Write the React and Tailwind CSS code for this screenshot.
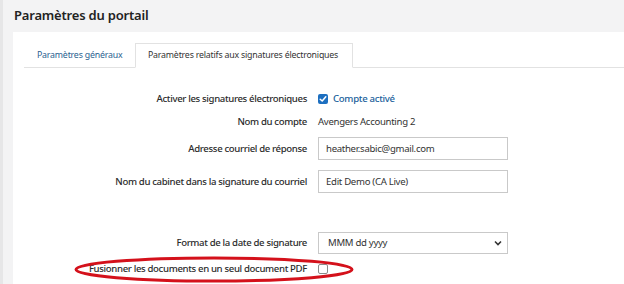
import React from "react";

function Check({ checked }) {
  if (checked) {
    return (
      <span className="w-[10px] h-[10px] rounded-[2px] bg-[#1d6fc0] flex items-center justify-center">
        <svg width="8" height="8" viewBox="0 0 8 8">
          <path d="M1.2 4.2 L3.2 6 L6.8 1.8" stroke="white" strokeWidth="1.5" fill="none" strokeLinecap="round" strokeLinejoin="round" />
        </svg>
      </span>
    );
  }
  return <span className="w-[10px] h-[10px] rounded-[2px] border border-[#8a8a8a] bg-white" />;
}

export default function App() {
  const label = "w-[294px] shrink-0 text-right mr-[11px] font-medium text-[#2b2b2b] tracking-[-0.35px]";
  const val = "text-[#333] tracking-[-0.3px]";
  return (
    <div className="w-[624px] h-[284px] bg-[#f3f3f4] relative overflow-hidden flex flex-col font-['Noto_Sans',sans-serif] text-[9.6px] leading-none border-l-[3px] border-[#e6e6e7]">
      <div className="h-[32px] flex items-center pl-[11px] pb-[2px]">
        <h1 className="text-[13px] font-semibold text-[#222] tracking-[-0.2px]">Paramètres du portail</h1>
      </div>
      <div className="ml-[10px] flex-1 bg-white flex flex-col">
        <div className="mt-[11px] ml-[11px] flex border-b border-[#e2e2e2] h-[25px] text-[8.8px] tracking-[-0.2px]">
          <div className="w-[111px] pl-[13px] flex items-center text-[#2a5f8f]">Paramètres généraux</div>
          <div className="w-[218px] pl-[12px] flex items-center text-[#333] border border-[#e2e2e2] border-b-white -mb-px bg-white">
            Paramètres relatifs aux signatures électroniques
          </div>
        </div>
        <div className="flex flex-col">
          <div className="flex items-center h-[22px] mt-[20px]">
            <div className={label}>Activer les signatures électroniques</div>
            <div className="flex items-center gap-[5px]">
              <Check checked />
              <span className="text-[#1a5f9c] font-medium tracking-[-0.3px]">Compte activé</span>
            </div>
          </div>
          <div className="flex items-center h-[22px] mt-[1px]">
            <div className={label}>Nom du compte</div>
            <div className={val}>Avengers Accounting 2</div>
          </div>
          <div className="flex items-center h-[23px] mt-[4px]">
            <div className={label}>Adresse courriel de réponse</div>
            <div className={"w-[190px] h-[23px] border border-[#c9c9c9] flex items-center pl-[7px] " + val}>heather.sabic@gmail.com</div>
          </div>
          <div className="flex items-center h-[23px] mt-[10px]">
            <div className={label}>Nom du cabinet dans la signature du courriel</div>
            <div className={"w-[190px] h-[23px] border border-[#c9c9c9] flex items-center pl-[7px] " + val}>Edit Demo (CA Live)</div>
          </div>
          <div className="flex items-center h-[22px] mt-[39px]">
            <div className={label}>Format de la date de signature</div>
            <div className={"w-[190px] h-[22px] border border-[#c9c9c9] flex items-center justify-between pl-[9px] pr-[5px] " + val}>
              <span>MMM dd yyyy</span>
              <svg width="8" height="6" viewBox="0 0 8 6">
                <path d="M1 1.5 L4 4.5 L7 1.5" stroke="#333" strokeWidth="1.6" fill="none" />
              </svg>
            </div>
          </div>
          <div className="flex items-center h-[18px] mt-[6px]">
            <div className={label}>Fusionner les documents en un seul document PDF</div>
            <Check />
          </div>
        </div>
      </div>
      <svg className="absolute left-[70px] top-[256px]" width="282" height="27" viewBox="0 0 282 27">
        <ellipse cx="141" cy="13.5" rx="138" ry="11.5" fill="none" stroke="#d4111b" strokeWidth="3" />
      </svg>
    </div>
  );
}
